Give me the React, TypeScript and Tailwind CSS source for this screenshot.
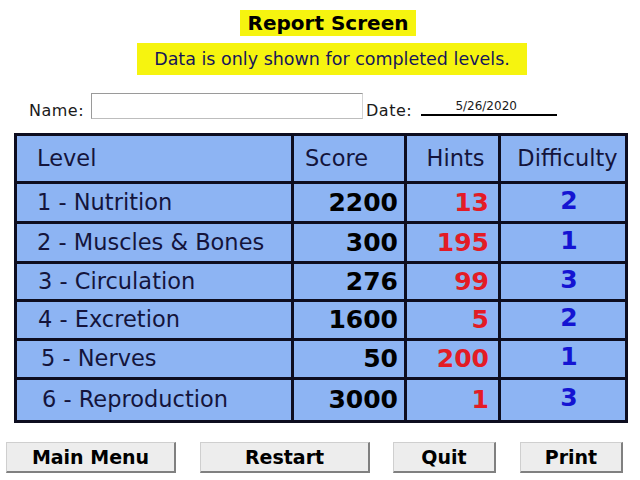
const rows = [
  { level: "1 - Nutrition", pad: "pl-[20px]", score: 2200, hints: 13, diff: 2, h: "h-[37px]" },
  { level: "2 - Muscles & Bones", pad: "pl-[20px]", score: 300, hints: 195, diff: 1, h: "h-[37px]" },
  { level: "3 - Circulation", pad: "pl-[21px]", score: 276, hints: 99, diff: 3, h: "h-[35px]" },
  { level: "4 - Excretion", pad: "pl-[21px]", score: 1600, hints: 5, diff: 2, h: "h-[36px]" },
  { level: "5 - Nerves", pad: "pl-[24px]", score: 50, hints: 200, diff: 1, h: "h-[36px]" },
  { level: "6 - Reproduction", pad: "pl-[25px]", score: 3000, hints: 1, diff: 3, h: "h-[40px]" },
];

function Button({ label, width }: { label: string; width: string }) {
  return (
    <button
      className={`${width} flex h-[31px] items-center justify-center border-t border-l border-t-[#cfcfcf] border-l-[#cfcfcf] border-r-2 border-b-2 border-r-[#808080] border-b-[#808080] bg-[#ededed] text-[19px] font-bold text-black`}
    >
      {label}
    </button>
  );
}

export default function App() {
  return (
    <div className="h-[480px] w-[640px] overflow-hidden bg-white pt-[10px] font-['DejaVu_Sans',sans-serif] text-[#14143c]">
      <div className="ml-[240px] flex h-[26px] w-[176px] items-center justify-center bg-[#f6f40f] text-[20px] font-bold text-black">
        Report Screen
      </div>
      <div className="ml-[137px] mt-[7px] flex h-[32px] w-[390px] items-center justify-center bg-[#f6f40f] text-[17.5px] text-[#16165a]">
        Data is only shown for completed levels.
      </div>

      <div className="mt-[18px] flex h-[26px] items-end">
        <span className="ml-[29px] w-[62px] text-[16px] leading-none tracking-[0.5px] text-[#1a1a1a]">Name:</span>
        <div className="h-[26px] w-[272px] border border-t-[#9a9a9a] border-l-[#9a9a9a] border-r-[#d4d4d4] border-b-[#bdbdbd] bg-white" />
        <span className="ml-[3px] text-[16px] leading-none tracking-[0.5px] text-[#1a1a1a]">Date:</span>
        <div className="mb-[3px] ml-[9px] flex w-[136px] justify-center border-b-2 border-b-black pb-[2px] pr-[6px]">
          <span className="text-[12px] leading-none text-[#1a1a1a]">5/26/2020</span>
        </div>
      </div>

      <div className="ml-[14px] mt-[14px] grid w-[614px] grid-cols-[274px_110px_91px_124px] gap-[3px] bg-[#0d0d1f] p-[3px] text-[22.5px]">
        <div className="flex h-[45px] items-center bg-[#8db4f3] pl-[20px]">Level</div>
        <div className="flex h-[45px] items-center bg-[#8db4f3] pl-[11px]">Score</div>
        <div className="flex h-[45px] items-center justify-center bg-[#8db4f3] pl-[6px]">Hints</div>
        <div className="flex h-[45px] items-center justify-center bg-[#8db4f3] pl-[9px]">Difficulty</div>
        {rows.map((r) => (
          <div key={r.level} className="contents">
            <div className={`flex ${r.h} items-center bg-[#8db4f3] ${r.pad}`}>{r.level}</div>
            <div className={`flex ${r.h} items-center justify-end bg-[#8db4f3] pr-[6px] text-[25px] font-bold text-black`}>
              {r.score}
            </div>
            <div className={`flex ${r.h} items-center justify-end bg-[#8db4f3] pr-[9px] text-[25px] font-bold text-[#e31b25]`}>
              {r.hints}
            </div>
            <div className={`flex ${r.h} items-center justify-center bg-[#8db4f3] pb-[4px] pl-[12px] text-[25px] font-bold text-[#1414d2]`}>
              {r.diff}
            </div>
          </div>
        ))}
      </div>

      <div className="mt-[19px] flex">
        <div className="ml-[6px]">
          <Button label="Main Menu" width="w-[170px]" />
        </div>
        <div className="ml-[24px]">
          <Button label="Restart" width="w-[170px]" />
        </div>
        <div className="ml-[23px]">
          <Button label="Quit" width="w-[103px]" />
        </div>
        <div className="ml-[24px]">
          <Button label="Print" width="w-[103px]" />
        </div>
      </div>
    </div>
  );
}
